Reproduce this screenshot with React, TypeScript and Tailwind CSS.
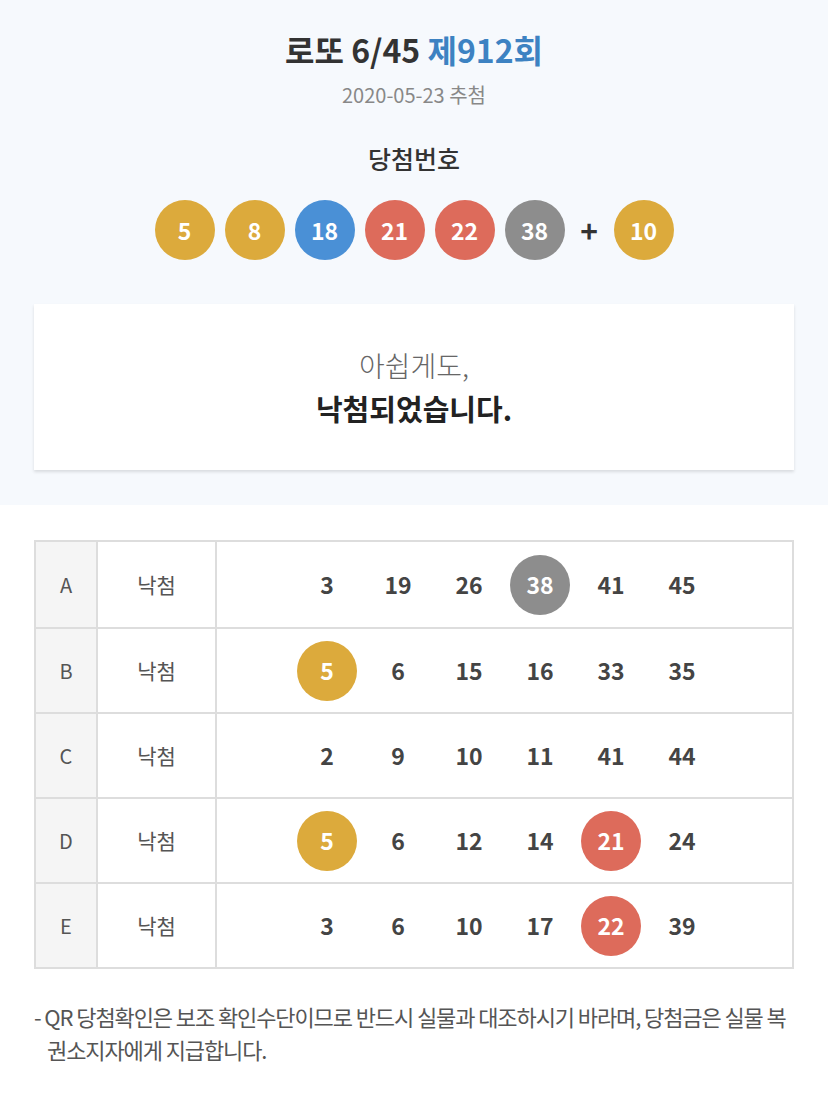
const winning = [5, 8, 18, 21, 22, 38];
const bonus = 10;

const rows: { label: string; nums: number[] }[] = [
  { label: "A", nums: [3, 19, 26, 38, 41, 45] },
  { label: "B", nums: [5, 6, 15, 16, 33, 35] },
  { label: "C", nums: [2, 9, 10, 11, 41, 44] },
  { label: "D", nums: [5, 6, 12, 14, 21, 24] },
  { label: "E", nums: [3, 6, 10, 17, 22, 39] },
];

function ballColor(n: number) {
  if (n <= 10) return "bg-[#dcaa3c]";
  if (n <= 20) return "bg-[#4a90d6]";
  if (n <= 30) return "bg-[#dd6b5b]";
  if (n <= 40) return "bg-[#8d8d8d]";
  return "bg-[#7cb342]";
}

function Ball({ n }: { n: number }) {
  return (
    <div
      className={`flex h-[60px] w-[60px] items-center justify-center rounded-full text-[23px] font-bold text-white ${ballColor(n)}`}
    >
      {n}
    </div>
  );
}

export default function App() {
  return (
    <div
      className="min-h-[1099px] w-[828px] bg-white text-[#333]"
      style={{ fontFamily: '"Noto Sans CJK KR", "Noto Sans", sans-serif' }}
    >
      {/* Header */}
      <div className="bg-[#f6f9fd] px-[34px] pb-[35px] pt-[24px]">
        <h1 className="text-center text-[32px] font-bold leading-[50px] text-[#333]">
          로또 6/45 <span className="text-[#3d82c2]">제912회</span>
        </h1>
        <p className="mt-[2px] text-center text-[20px] leading-[38px] text-[#888]">
          2020-05-23 추첨
        </p>
        <h2 className="mt-[27px] text-center text-[25px] font-medium leading-[34px] text-[#333]">
          당첨번호
        </h2>
        <div className="mt-[25px] flex items-center justify-center gap-[10px]">
          {winning.map((n) => (
            <Ball key={n} n={n} />
          ))}
          <span className="w-[29px] text-center text-[30px] font-bold leading-none text-[#333]">
            +
          </span>
          <Ball n={bonus} />
        </div>

        {/* Result card */}
        <div className="mt-[44px] flex h-[166px] flex-col items-center justify-center bg-white shadow-[0_2px_3px_rgba(0,0,0,0.12)]">
          <p className="text-[28px] font-light leading-[42px] text-[#666]">아쉽게도,</p>
          <p className="text-[29px] font-bold leading-[44px] text-[#222]">낙첨되었습니다.</p>
        </div>
      </div>

      {/* Tickets */}
      <div className="px-[34px] pt-[35px]">
        <div className="border-2 border-[#ddd]">
          {rows.map((row, i) => (
            <div
              key={row.label}
              className={`flex h-[85px] ${i > 0 ? "border-t-2 border-[#ddd]" : ""}`}
            >
              <div className="flex w-[60px] items-center justify-center bg-[#f5f5f5] text-[20px] text-[#555]">
                {row.label}
              </div>
              <div className="flex w-[121px] items-center justify-center border-x-2 border-[#ddd] text-[21px] text-[#555]">
                낙첨
              </div>
              <div className="flex flex-1 items-center justify-center gap-[11px]">
                {row.nums.map((n) =>
                  winning.includes(n) ? (
                    <Ball key={n} n={n} />
                  ) : (
                    <div
                      key={n}
                      className="flex h-[60px] w-[60px] items-center justify-center text-[23px] font-bold text-[#444]"
                    >
                      {n}
                    </div>
                  )
                )}
              </div>
            </div>
          ))}
        </div>

        <p className="mt-[31px] pl-[13px] -indent-[13px] text-[22px] leading-[33px] tracking-[-1.1px] text-[#555]">
          - QR 당첨확인은 보조 확인수단이므로 반드시 실물과 대조하시기 바라며, 당첨금은 실물 복권소지자에게 지급합니다.
        </p>
      </div>
    </div>
  );
}
